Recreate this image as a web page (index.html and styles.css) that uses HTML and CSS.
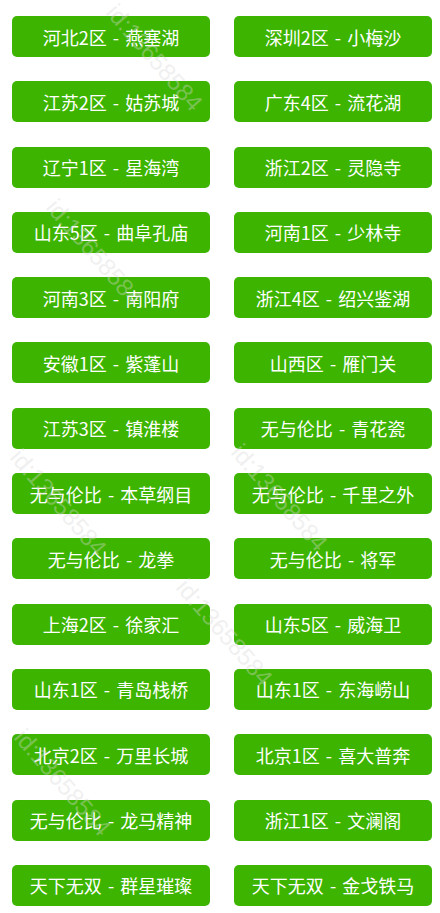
FILE: index.html
```html
<!DOCTYPE html>
<html lang="zh-CN">
<head>
    <meta charset="UTF-8">
    <meta name="viewport" content="width=device-width, initial-scale=1.0">
    <title>选择大区</title>
    <link rel="stylesheet" href="styles.css">
</head>
<body>

    <div class="servers">
        <a class="server">河北2区 - 燕塞湖</a>
        <a class="server">深圳2区 - 小梅沙</a>
        <a class="server">江苏2区 - 姑苏城</a>
        <a class="server">广东4区 - 流花湖</a>
        <a class="server">辽宁1区 - 星海湾</a>
        <a class="server">浙江2区 - 灵隐寺</a>
        <a class="server">山东5区 - 曲阜孔庙</a>
        <a class="server">河南1区 - 少林寺</a>
        <a class="server">河南3区 - 南阳府</a>
        <a class="server">浙江4区 - 绍兴鉴湖</a>
        <a class="server">安徽1区 - 紫蓬山</a>
        <a class="server">山西区 - 雁门关</a>
        <a class="server">江苏3区 - 镇淮楼</a>
        <a class="server">无与伦比 - 青花瓷</a>
        <a class="server">无与伦比 - 本草纲目</a>
        <a class="server">无与伦比 - 千里之外</a>
        <a class="server">无与伦比 - 龙拳</a>
        <a class="server">无与伦比 - 将军</a>
        <a class="server">上海2区 - 徐家汇</a>
        <a class="server">山东5区 - 威海卫</a>
        <a class="server">山东1区 - 青岛栈桥</a>
        <a class="server">山东1区 - 东海崂山</a>
        <a class="server">北京2区 - 万里长城</a>
        <a class="server">北京1区 - 喜大普奔</a>
        <a class="server">无与伦比 - 龙马精神</a>
        <a class="server">浙江1区 - 文澜阁</a>
        <a class="server">天下无双 - 群星璀璨</a>
        <a class="server">天下无双 - 金戈铁马</a>
    </div>

    <!-- 水印 -->
    <div class="mark mark-1">id:13658584</div>
    <div class="mark mark-2">id:13658584</div>
    <div class="mark mark-3">id:13658584</div>
    <div class="mark mark-4">id:13658584</div>
    <div class="mark mark-5">id:13658584</div>
    <div class="mark mark-6">id:13658584</div>

</body>
</html>
```

FILE: styles.css
```css
/* 页面 */
html, body {
    height: 913px;
    overflow: hidden;
}

body {
    font-family: "Noto Sans CJK SC", "Noto Sans", sans-serif;
    background-color: #fff;
    margin: 0;
    padding: 0;
    position: relative;
}

/* 大区列表 */
.servers {
    display: grid;
    grid-template-columns: 198px 198px;
    column-gap: 24px;
    row-gap: 24.3px;
    padding: 16px 8px 0 12px;
}

.server {
    height: 41px;
    display: flex;
    align-items: center;
    justify-content: center;
    background-color: #3db500;
    color: #fff;
    font-size: 18px;
    word-spacing: 2px;
    border-radius: 5px;
    cursor: pointer;
    white-space: nowrap;
}

/* 水印 */
.mark {
    position: absolute;
    font-family: "Liberation Sans", sans-serif;
    font-size: 24px;
    line-height: 24px;
    color: rgba(215, 215, 215, 0.4);
    transform-origin: left top;
    transform: rotate(49deg);
    pointer-events: none;
    white-space: nowrap;
}

.mark-1 { left: 120px; top: 0; }
.mark-2 { left: 60px;  top: 195px; }
.mark-3 { left: 24px;  top: 445px; }
.mark-4 { left: 245px; top: 440px; }
.mark-5 { left: 190px; top: 575px; }
.mark-6 { left: 28px;  top: 725px; }
```
